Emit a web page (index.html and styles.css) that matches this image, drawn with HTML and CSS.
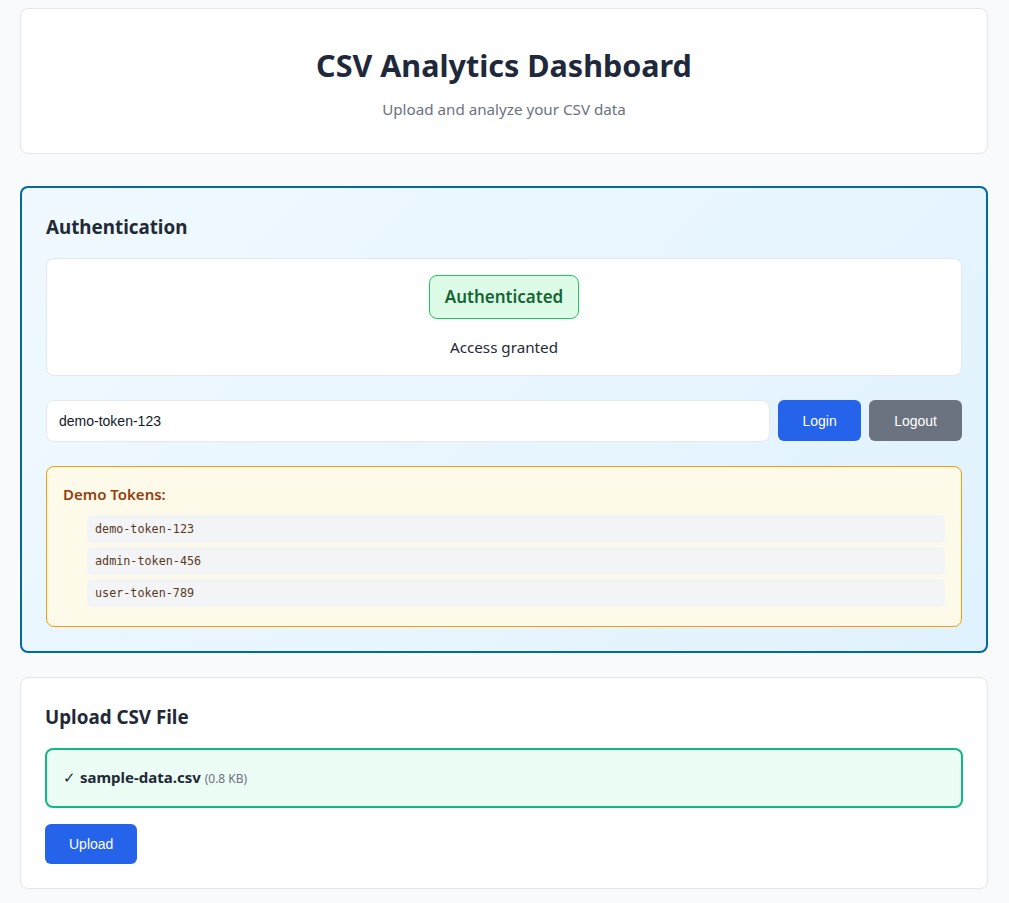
FILE: index.html
```html
<!DOCTYPE html>
<html lang="en">
<head>
<meta charset="utf-8">
<title>CSV Analytics Dashboard</title>
<link rel="stylesheet" href="styles.css">
</head>
<body>
<div class="container">
  <header class="card header">
    <h1>CSV Analytics Dashboard</h1>
    <p class="subtitle">Upload and analyze your CSV data</p>
  </header>

  <section class="card auth">
    <h2>Authentication</h2>
    <div class="status">
      <div class="badge">Authenticated</div>
      <p class="status-text">Access granted</p>
    </div>
    <div class="token-row">
      <input class="token-input" type="text" value="demo-token-123">
      <button class="btn btn-primary">Login</button>
      <button class="btn btn-secondary">Logout</button>
    </div>
    <div class="demo">
      <h4>Demo Tokens:</h4>
      <ul class="demo-list">
        <li><code>demo-token-123</code></li>
        <li><code>admin-token-456</code></li>
        <li><code>user-token-789</code></li>
      </ul>
    </div>
  </section>

  <section class="card upload">
    <h2>Upload CSV File</h2>
    <div class="dropzone">
      <span class="check">✓</span> <strong>sample-data.csv</strong> <span class="size">(0.8 KB)</span>
    </div>
    <button class="btn btn-primary btn-upload">Upload</button>
  </section>
</div>
</body>
</html>
```

FILE: styles.css
```css
* { box-sizing: border-box; }

body {
  margin: 0;
  background: #f8fafc;
  color: #1f2937;
  font-family: "Noto Sans", "Open Sans", sans-serif;
  font-size: 16px;
  line-height: 24px;
}

.container {
  padding: 8px 21px 20px 20px;
}

.card {
  background: #fff;
  border: 1px solid #e5e7eb;
  border-radius: 8px;
  padding: 24px;
}

.header {
  padding: 32px;
  text-align: center;
  margin-bottom: 32px;
}

.header h1 {
  margin: 0 0 8px;
  font-size: 30.5px;
  line-height: 48px;
  font-weight: 700;
  color: #1e293b;
}

.subtitle {
  margin: 0;
  color: #6b7280;
  font-size: 15.2px;
  line-height: 24px;
}

h2 {
  margin: 0 0 16px;
  font-size: 18.8px;
  line-height: 30px;
  font-weight: 700;
  color: #1f2937;
}

.auth {
  border: 2px solid #0369a1;
  background: linear-gradient(135deg, #f0f9ff 0%, #e0f2fe 100%);
  margin-bottom: 24px;
}

.status {
  background: #fff;
  border: 1px solid #e2e8f0;
  border-radius: 8px;
  padding: 16px;
  display: flex;
  flex-direction: column;
  align-items: center;
}

.badge {
  background: #dcfce7;
  border: 1px solid #22c55e;
  border-radius: 8px;
  color: #166534;
  font-weight: 600;
  font-size: 17px;
  line-height: 26px;
  padding: 8px 15px;
}

.status-text {
  margin: 16px 0 0;
  font-size: 15.2px;
  line-height: 24px;
  color: #1f2937;
}

.token-row {
  display: flex;
  gap: 8px;
  margin-top: 24px;
}

.token-input {
  flex: 1;
  height: 42px;
  border: 1px solid #e5e7eb;
  border-radius: 8px;
  padding: 0 12px;
  font-family: "Liberation Sans", Arial, sans-serif;
  font-size: 14px;
  color: #111827;
  background: #fff;
}

.btn {
  border: none;
  border-radius: 6px;
  font-family: "Liberation Sans", Arial, sans-serif;
  font-size: 14px;
  color: #fff;
  padding: 0 24px;
  height: 41px;
  cursor: pointer;
}

.btn-primary { background: #2563eb; }
.btn-secondary { background: #6b7280; padding: 0 25px; }
.token-row .btn-primary { padding: 0 24.5px; }

.demo {
  margin-top: 24px;
  background: #fefaea;
  border: 1px solid #f59e0b;
  border-radius: 8px;
  padding: 16px 16px 15px;
}

.demo h4 {
  margin: 0 0 10px;
  font-size: 15px;
  line-height: 22px;
  font-weight: 600;
  color: #92400e;
}

.demo-list {
  list-style: none;
  margin: 0;
  padding: 0 0 0 24px;
}

.demo-list li {
  margin-bottom: 4px;
}

.demo-list code {
  display: block;
  background: #f3f4f6;
  border-radius: 4px;
  padding: 6px 8px;
  font-family: "DejaVu Sans Mono", "Liberation Mono", monospace;
  font-size: 11.75px;
  line-height: 16px;
  color: #5b3a1e;
}

.upload h2 { margin-bottom: 16px; }

.dropzone {
  background: #ecfdf5;
  border: 2px solid #10b981;
  border-radius: 8px;
  padding: 15px 16px;
  font-size: 15px;
  line-height: 24px;
  color: #1f2937;
}

.dropzone strong { font-weight: 700; }

.size {
  font-size: 12px;
  color: #6b7280;
}

.btn-upload {
  margin-top: 16px;
  height: 40px;
}
```
